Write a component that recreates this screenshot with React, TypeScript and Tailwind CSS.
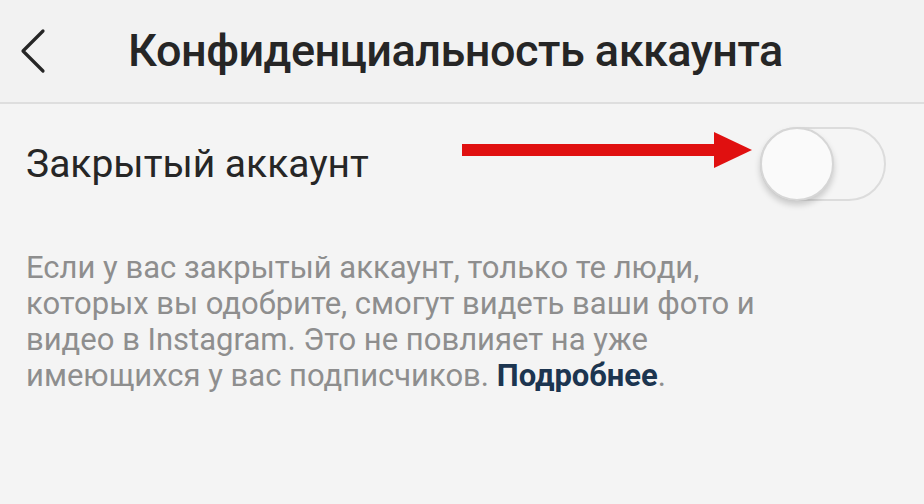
const font = { fontFamily: 'Roboto, "Noto Sans", sans-serif' };

function BackChevron() {
  return (
    <svg width="30" height="46" viewBox="0 0 30 46" fill="none">
      <path d="M25 3 L5 23 L25 43" stroke="#262626" strokeWidth="3.2" strokeLinecap="round" strokeLinejoin="round" />
    </svg>
  );
}

function RedArrow() {
  return (
    <svg width="290" height="36" viewBox="0 0 290 36">
      <rect x="0" y="12" width="256" height="12" fill="#e01010" />
      <polygon points="252,0 290,18 252,36" fill="#e01010" />
    </svg>
  );
}

function Toggle() {
  return (
    <div className="relative h-[74px] w-[126px] rounded-full border-2 border-[#dcdcdc] bg-[#f5f5f5]">
      <div className="absolute -left-[2px] -top-[2px] h-[74px] w-[74px] rounded-full border-2 border-[#d6d6d6] bg-[#fafafa] shadow-[0_4px_6px_rgba(0,0,0,0.18)]" />
    </div>
  );
}

export default function App() {
  return (
    <div className="h-[504px] w-[924px] overflow-hidden bg-[#f4f4f4]" style={font}>
      <header className="flex h-[104px] items-center border-b-2 border-[#dedede] bg-[#f2f2f2] pl-[18px]">
        <BackChevron />
        <h1 className="ml-[80px] text-[45px] font-medium tracking-[-0.5px] text-[#262626]">
          Конфиденциальность аккаунта
        </h1>
      </header>
      <div className="flex h-[120px] items-center pl-[26px] pr-[38px]">
        <span className="text-[39px] text-[#262626]">Закрытый аккаунт</span>
        <div className="ml-auto flex items-center gap-[8px]">
          <div className="mb-[28px]">
            <RedArrow />
          </div>
          <Toggle />
        </div>
      </div>
      <p className="mt-[26px] w-[820px] pl-[26px] text-[31px] font-normal leading-[36px] text-[#8e8e8e]">
        Если у вас закрытый аккаунт, только те люди,
        <br />
        которых вы одобрите, смогут видеть ваши фото и
        <br />
        видео в Instagram. Это не повлияет на уже
        <br />
        имеющихся у вас подписчиков.{' '}
        <span className="font-bold text-[#1c3550]">Подробнее</span>.
      </p>
    </div>
  );
}
